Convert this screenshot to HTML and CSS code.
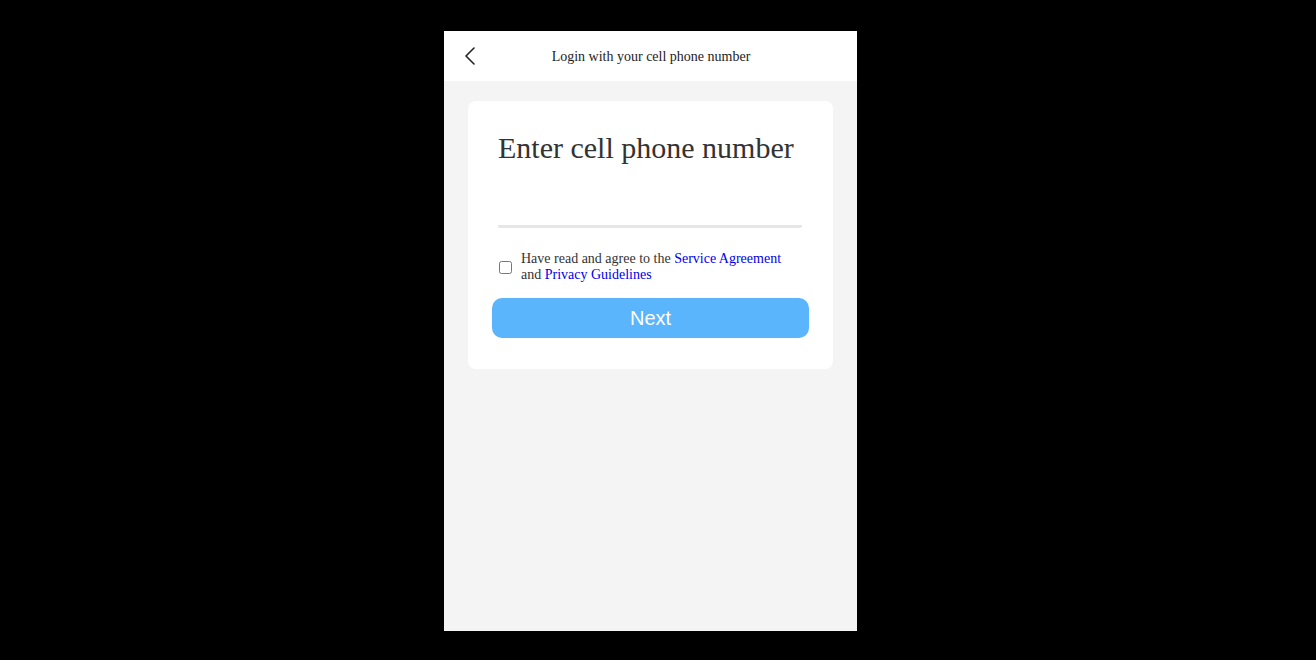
FILE: index.html
```html
<!DOCTYPE html>
<html>
<head>
<meta charset="utf-8">
<link rel="stylesheet" href="styles.css">
</head>
<body>
<div class="stage">
  <div class="phone">
    <header class="topbar">
      <button class="back" aria-label="Back">
        <svg width="12" height="18" viewBox="0 0 12 18"><path d="M10 1 L2 9 L10 17" fill="none" stroke="#222" stroke-width="1.6" stroke-linecap="round" stroke-linejoin="round"/></svg>
      </button>
      <div class="topbar-title">Login with your cell phone number</div>
    </header>
    <main class="content">
      <section class="card">
        <h1 class="card-title">Enter cell phone number</h1>
        <div class="field"><input class="phone-input" type="tel"></div>
        <label class="agree">
          <input type="checkbox" class="agree-box">
          <span class="agree-text">Have read and agree to the <a href="#" class="link">Service Agreement</a> and <a href="#" class="link">Privacy Guidelines</a></span>
        </label>
        <button class="next">Next</button>
      </section>
    </main>
  </div>
</div>
</body>
</html>
```

FILE: styles.css
```css
html, body {
  margin: 0;
  padding: 0;
  background: #000;
  height: 100%;
}
.stage {
  display: flex;
  justify-content: center;
  padding-top: 31px;
  padding-right: 15px;
}
.phone {
  width: 413px;
  height: 600px;
  background: #f4f4f4;
  display: flex;
  flex-direction: column;
  font-family: "Liberation Serif", "Times New Roman", serif;
}
.topbar {
  height: 50px;
  background: #fff;
  display: flex;
  align-items: center;
  position: relative;
}
.back {
  position: absolute;
  left: 20px;
  top: 16px;
  padding: 0;
  border: 0;
  background: none;
  width: 12px;
  height: 18px;
  display: flex;
}
.topbar-title {
  flex: 1;
  text-align: center;
  font-size: 14px;
  color: #222;
  padding: 2px 0 0 1px;
}
.content {
  padding: 20px 24px 0;
}
.card {
  background: #fff;
  border-radius: 8px;
  padding: 30px 24px 31px;
}
.card-title {
  margin: 0 6px;
  font-weight: normal;
  font-size: 30px;
  color: #333;
  line-height: 33px;
}
.field {
  margin: 0 7px 0 6px;
  padding-top: 30px;
}
.phone-input {
  display: block;
  width: 100%;
  box-sizing: border-box;
  height: 34px;
  border: 0;
  border-bottom: 3px solid #e6e6e6;
  border-radius: 2px;
  outline: none;
  background: transparent;
  font-size: 20px;
}
.agree {
  display: flex;
  align-items: center;
  margin: 23px 0 0 4px;
}
.agree-box {
  width: 13px;
  height: 13px;
  margin: 0 9px 0 3px;
  flex: none;
}
.agree-text {
  width: 272px;
  font-size: 14px;
  line-height: 16px;
  color: #333;
}
.link {
  color: #0000ee;
  text-decoration: none;
}
.next {
  display: block;
  width: 100%;
  height: 40px;
  margin-top: 15px;
  border: 0;
  border-radius: 10px;
  background: #5ab5fc;
  color: #fff;
  font-family: "Liberation Sans", Arial, sans-serif;
  font-size: 20px;
}
```
